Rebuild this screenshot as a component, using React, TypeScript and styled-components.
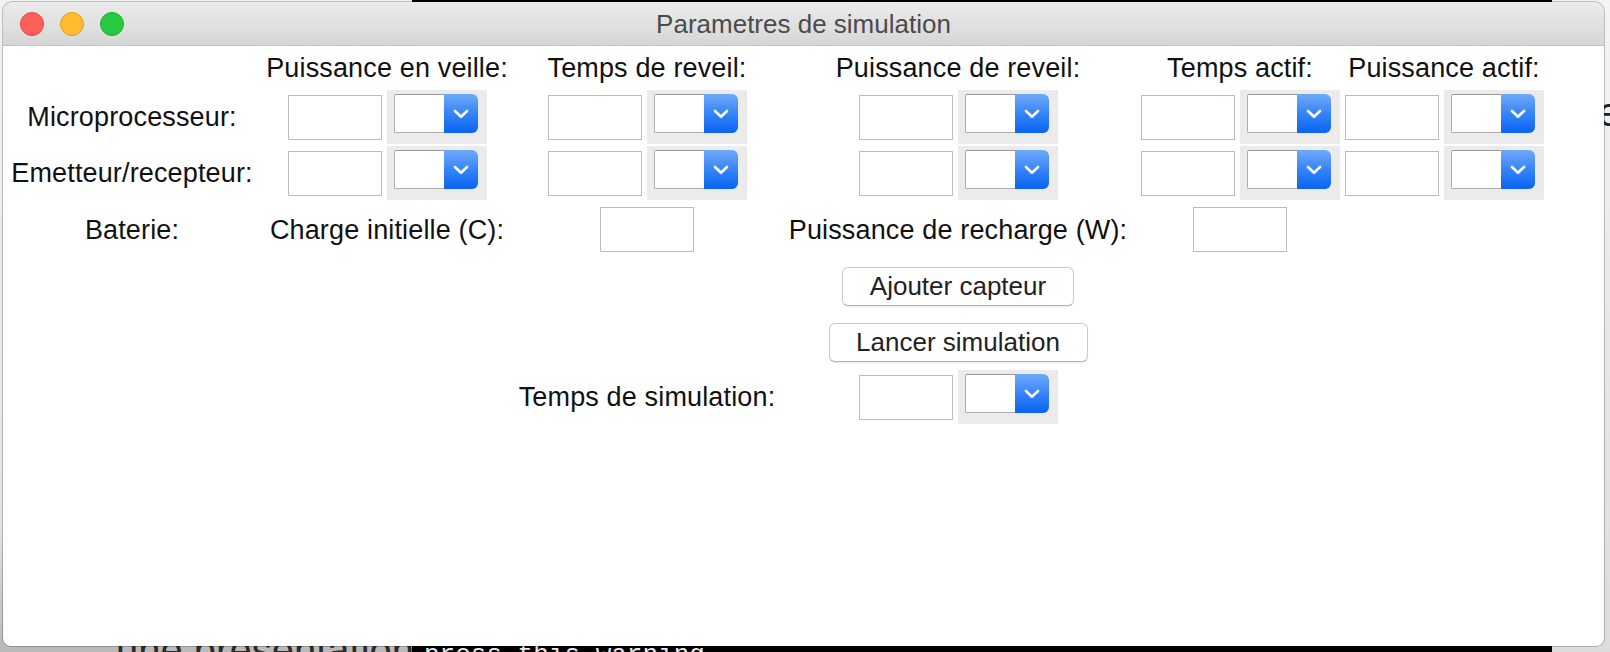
import React from "react";
import styled, { createGlobalStyle } from "styled-components";

const Global = createGlobalStyle`
  html, body { margin: 0; padding: 0; width: 1610px; height: 652px; overflow: hidden; background: #000; }
  #root { width: 1610px; height: 652px; }
  * { box-sizing: border-box; }
`;

const COLS = "248px 262px 258px 364px 200px 208px";

const Desktop = styled.div`
  position: relative;
  width: 1610px;
  height: 652px;
  display: flex;
  overflow: hidden;
  font-family: "Liberation Sans", Arial, sans-serif;
`;

const Pane = styled.div<{ $w: number; $bg: string }>`
  width: ${(p) => p.$w}px;
  flex: none;
  height: 652px;
  background: ${(p) => p.$bg};
  display: flex;
  flex-direction: column;
  justify-content: space-between;
  overflow: hidden;
`;

const PaneText = styled.div<{ $color: string; $size: number; $pl: number; $mono?: boolean; $mb: number; $mt?: number }>`
  color: ${(p) => p.$color};
  font-size: ${(p) => p.$size}px;
  line-height: 1;
  padding-left: ${(p) => p.$pl}px;
  margin-bottom: ${(p) => p.$mb}px;
  margin-top: ${(p) => p.$mt ?? 0}px;
  white-space: nowrap;
  overflow: hidden;
  font-family: ${(p) => (p.$mono ? '"Liberation Mono", monospace' : '"Liberation Sans", Arial, sans-serif')};
`;

const Window = styled.div`
  position: absolute;
  left: 3px;
  top: 2px;
  width: 1601px;
  height: 644px;
  background: #fff;
  border-radius: 10px 10px 8px 8px;
  box-shadow: 0 0 0 1px rgba(0, 0, 0, 0.22);
  overflow: hidden;
  display: flex;
  flex-direction: column;
`;

const TitleBar = styled.div`
  height: 44px;
  flex: none;
  display: grid;
  grid-template-columns: 1fr auto 1fr;
  align-items: center;
  background: linear-gradient(#ececec, #d6d6d6);
  border-bottom: 1px solid #c2c2c2;
`;

const Lights = styled.div`
  display: flex;
  gap: 16px;
  padding-left: 17px;
  padding-top: 1px;
`;

const Light = styled.span<{ $fill: string; $edge: string }>`
  width: 24px;
  height: 24px;
  border-radius: 50%;
  background: ${(p) => p.$fill};
  border: 1px solid ${(p) => p.$edge};
`;

const Title = styled.div`
  font-size: 26px;
  color: #4b4b4b;
  white-space: nowrap;
  padding-top: 1px;
`;

const Content = styled.div`
  padding-left: 5px;
  display: flex;
  flex-direction: column;
`;

const Row = styled.div<{ $h: number; $mt: number }>`
  display: grid;
  grid-template-columns: ${COLS};
  height: ${(p) => p.$h}px;
  margin-top: ${(p) => p.$mt}px;
  align-items: center;
  justify-items: center;
`;

const Label = styled.span<{ $col: number }>`
  grid-column: ${(p) => p.$col + 1};
  font-size: 27px;
  letter-spacing: 0.15px;
  line-height: 30px;
  color: #111;
  white-space: nowrap;
`;

const Group = styled.div<{ $col: number }>`
  grid-column: ${(p) => p.$col + 1};
  display: flex;
  align-items: center;
  gap: 5px;
`;

const Field = styled.input<{ $col?: number }>`
  ${(p) => (p.$col !== undefined ? `grid-column: ${p.$col + 1};` : "")}
  width: 94px;
  height: 45px;
  border: 1px solid #bdbdbd;
  background: #fff;
  padding: 0 6px;
  margin: 0;
  outline: none;
  font-size: 20px;
  font-family: inherit;
`;

const Well = styled.div`
  width: 100px;
  height: 54px;
  background: #ebebeb;
  padding: 4px 9px 11px 7px;
  display: flex;
`;

const SelectValue = styled.div`
  flex: 1;
  background: #fff;
  border: 1px solid #acacac;
  border-top-color: #9c9c9c;
  border-right: none;
  border-radius: 2px 0 0 2px;
`;

const SelectArrow = styled.div`
  width: 34px;
  border-radius: 0 6px 6px 0;
  background: linear-gradient(#70aaf9, #3584f7 50%, #0964f4);
  display: flex;
  align-items: center;
  justify-content: center;
`;

const Button = styled.button<{ $col: number; $w: number }>`
  grid-column: ${(p) => p.$col + 1};
  width: ${(p) => p.$w}px;
  height: 39px;
  padding: 0;
  background: #fff;
  border: 1px solid #cacaca;
  border-bottom-color: #b3b3b3;
  border-radius: 6px;
  box-shadow: 0 1px 1px rgba(0, 0, 0, 0.08);
  font-family: "Liberation Sans", Arial, sans-serif;
  font-size: 26px;
  color: #222;
`;

const Combo: React.FC = () => (
  <Well>
    <SelectValue />
    <SelectArrow>
      <svg width="16" height="10" viewBox="0 0 16 10">
        <polyline points="2,2 8,7.8 14,2" fill="none" stroke="#fff" strokeWidth="2.6" strokeLinecap="round" strokeLinejoin="round" />
      </svg>
    </SelectArrow>
  </Well>
);

const Pair: React.FC<{ col: number }> = ({ col }) => (
  <Group $col={col}>
    <Field />
    <Combo />
  </Group>
);

const headers = ["Puissance en veille:", "Temps de reveil:", "Puissance de reveil:", "Temps actif:", "Puissance actif:"];

export default function App() {
  return (
    <>
      <Global />
      <Desktop>
        <Pane $w={412} $bg="linear-gradient(#f2f2f2, #e4e4e4 80%, #b9b9b9)">
          <span />
          <PaneText $color="#2a2a2a" $size={40} $pl={116} $mb={-18}>une présentation</PaneText>
        </Pane>
        <Pane $w={1140} $bg="#000">
          <span />
          <PaneText $color="#e8e8e8" $size={26} $pl={12} $mb={-16} $mono>press this warning</PaneText>
        </Pane>
        <Pane $w={58} $bg="linear-gradient(#f4f4f4, #dcdcdc)">
          <PaneText $color="#222" $size={40} $pl={46} $mb={0} $mt={92}>e</PaneText>
          <span />
        </Pane>

        <Window>
          <TitleBar>
            <Lights>
              <Light $fill="#fe5f57" $edge="#e2463f" />
              <Light $fill="#febc2e" $edge="#dfa023" />
              <Light $fill="#28c840" $edge="#1dad2b" />
            </Lights>
            <Title>Parametres de simulation</Title>
            <span />
          </TitleBar>
          <Content>
            <Row $h={30} $mt={7}>
              {headers.map((h, i) => (
                <Label key={h} $col={i + 1}>{h}</Label>
              ))}
            </Row>
            <Row $h={54} $mt={7}>
              <Label $col={0}>Microprocesseur:</Label>
              {[1, 2, 3, 4, 5].map((c) => (
                <Pair key={c} col={c} />
              ))}
            </Row>
            <Row $h={54} $mt={2}>
              <Label $col={0}>Emetteur/recepteur:</Label>
              {[1, 2, 3, 4, 5].map((c) => (
                <Pair key={c} col={c} />
              ))}
            </Row>
            <Row $h={55} $mt={2}>
              <Label $col={0}>Baterie:</Label>
              <Label $col={1}>Charge initielle (C):</Label>
              <Field $col={2} />
              <Label $col={3}>Puissance de recharge (W):</Label>
              <Field $col={4} />
            </Row>
            <Row $h={49} $mt={5}>
              <Button $col={3} $w={232}>Ajouter capteur</Button>
            </Row>
            <Row $h={49} $mt={7}>
              <Button $col={3} $w={259}>Lancer simulation</Button>
            </Row>
            <Row $h={54} $mt={3}>
              <Label $col={2}>Temps de simulation:</Label>
              <Pair col={3} />
            </Row>
          </Content>
        </Window>
      </Desktop>
    </>
  );
}
